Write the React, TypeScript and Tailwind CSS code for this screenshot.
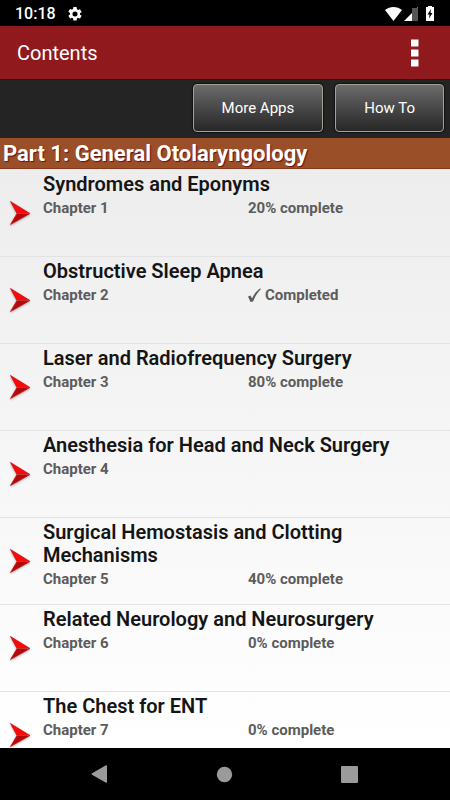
interface Chapter {
  number: number
  title: string
  progress?: number
}

const chapters: Chapter[] = [
  { number: 1, title: 'Syndromes and Eponyms', progress: 20 },
  { number: 2, title: 'Obstructive Sleep Apnea', progress: 100 },
  { number: 3, title: 'Laser and Radiofrequency Surgery', progress: 80 },
  { number: 4, title: 'Anesthesia for Head and Neck Surgery' },
  { number: 5, title: 'Surgical Hemostasis and Clotting Mechanisms', progress: 40 },
  { number: 6, title: 'Related Neurology and Neurosurgery', progress: 0 },
  { number: 7, title: 'The Chest for ENT', progress: 0 },
]

function StatusBar() {
  return (
    <div className="flex h-[26px] shrink-0 items-center justify-between bg-black pl-[15px] pr-4 pt-px text-white">
      <div className="flex items-center gap-3">
        <span className="text-base font-medium leading-5">10:18</span>
        <svg width="14" height="14" viewBox="2 2 20 20" fill="currentColor">
          <path d="M19.14 12.94c.04-.3.06-.61.06-.94s-.02-.64-.07-.94l2.03-1.58a.49.49 0 0 0 .12-.61l-1.92-3.32a.49.49 0 0 0-.59-.22l-2.39.96a7 7 0 0 0-1.62-.94l-.36-2.54A.48.48 0 0 0 13.92 2h-3.84a.47.47 0 0 0-.47.41l-.36 2.54c-.59.24-1.13.57-1.62.94l-2.39-.96a.47.47 0 0 0-.59.22L2.74 8.47a.48.48 0 0 0 .12.61l2.03 1.58c-.05.3-.09.63-.09.94s.02.64.07.94l-2.03 1.58a.49.49 0 0 0-.12.61l1.92 3.32c.12.22.37.29.59.22l2.39-.96c.5.38 1.03.7 1.62.94l.36 2.54c.05.24.24.41.48.41h3.84c.24 0 .44-.17.47-.41l.36-2.54a7 7 0 0 0 1.62-.94l2.39.96c.22.08.47 0 .59-.22l1.92-3.32a.47.47 0 0 0-.12-.61zM12 15.6a3.6 3.6 0 1 1 0-7.2 3.6 3.6 0 0 1 0 7.2z" />
        </svg>
      </div>
      <div className="flex items-center">
        <svg width="17" height="14" viewBox="0 0 17 14" fill="currentColor">
          <path d="M0 3C5 -1 12 -1 17 3L8.500 14Z" />
        </svg>
        <svg className="ml-0.5" width="14" height="14" viewBox="0 0 14 14">
          <path d="M0 14L14 0V14Z" fill="#fff" />
          <path d="M8 1H14V14H8Z" fill="#555" />
        </svg>
        <svg className="ml-2" width="8" height="15" viewBox="0 0 8 15">
          <path d="M2 0H6V1H8V15H0V1H2Z" fill="#fff" />
          <path d="M5 3L1.500 8.500H3.500L3 12.500L6.500 7H4.500Z" fill="#000" />
        </svg>
      </div>
    </div>
  )
}

function Arrow() {
  return (
    <svg
      className="drop-shadow-[0_1px_1px_rgba(0,0,0,0.3)]"
      width="21"
      height="24"
      viewBox="0 0 21 24"
    >
      <path d="M0.500 0.500L20 12.500H7Z" fill="#fb0808" />
      <path d="M0.500 23.500L20 12.500H7Z" fill="#b20a0c" />
      <path d="M0.500 0.500L20 12.500L0.500 23.500L7 12.500Z" fill="none" stroke="#c80c0c" strokeWidth="0.700" />
    </svg>
  )
}

function ToolbarButton({ label }: { label: string }) {
  return (
    <button className="h-12 rounded border border-[#a5a193] bg-linear-to-b from-[#6c6c6c] to-[#272727] px-7 text-[15px] text-white shadow-[0_0_1px_1px_#111]">
      {label}
    </button>
  )
}

function ChapterRow({ chapter }: { chapter: Chapter }) {
  const { number, title, progress } = chapter

  return (
    <li className="border-b border-[#e3e3e3]">
      <button className="flex h-[86px] w-full items-start pl-2.5 text-left">
        <span className="flex h-full w-[33px] shrink-0 items-center">
          <Arrow />
        </span>
        <span className="block flex-1 pt-[3px]">
          <span className="block text-xl font-semibold leading-[23px] text-[#151515]">{title}</span>
          <span className="flex pt-0.5 text-[15px] font-bold leading-5 text-[#5c5c5c]">
            <span className="w-[205px]">Chapter {number}</span>
            {progress === 100 && (
              <span className="flex items-center gap-1">
                <svg width="13" height="14" viewBox="0 0 13 14" fill="currentColor">
                  <path d="M0 8.500L2.500 7.500L4 10.500C6 6 9 2.500 12 0.500L13 1C9.500 4.500 7 8.500 5 13.500L2.500 14Z" />
                </svg>
                Completed
              </span>
            )}
            {progress !== undefined && progress < 100 && <span>{progress}% complete</span>}
          </span>
        </span>
      </button>
    </li>
  )
}

export default function App() {
  return (
    <div className="flex h-screen flex-col overflow-hidden bg-black font-['Roboto',sans-serif]">
      <StatusBar />

      <header className="flex h-[53px] shrink-0 items-center justify-between bg-[#8f191d] pl-[17px] pr-[31px] text-white">
        <h1 className="text-xl leading-6">Contents</h1>
        <button aria-label="More options">
          <svg width="8" height="28" viewBox="0 0 8 28" fill="currentColor">
            <path d="M0 0.500H7.500V7.500H0ZM0 10.500H7.500V17.500H0ZM0 20.500H7.500V27.500H0Z" />
          </svg>
        </button>
      </header>

      <div className="flex h-[59px] shrink-0 items-center justify-end gap-3 border-t border-[#1a1a1a] bg-[#242424] px-1.5 pb-0.5">
        <ToolbarButton label="More Apps" />
        <ToolbarButton label="How To" />
      </div>

      <main className="flex min-h-0 flex-1 flex-col bg-linear-to-b from-[#ececec] to-white">
        <h2 className="h-[31px] shrink-0 border-b border-[#8a3a1c] bg-[#9a4f28] pl-[3px] text-[22px] font-bold leading-8 text-white [text-shadow:1px_1px_1px_#6b1010]">
          Part 1: General Otolaryngology
        </h2>
        <ul className="min-h-0 flex-1 overflow-y-auto pt-px [scrollbar-width:none]">
          {chapters.map((chapter) => (
            <ChapterRow key={chapter.number} chapter={chapter} />
          ))}
        </ul>
      </main>

      <nav className="flex h-[52px] shrink-0 items-center justify-center gap-[108px] pr-0.5 text-[#9b9b9b]">
        <button aria-label="Back">
          <svg width="17" height="18" viewBox="0 0 17 18" fill="currentColor">
            <path d="M15 0.300Q16 0 16 1V17Q16 18 15 17.700L1 9.700Q0 9 1 8.300Z" />
          </svg>
        </button>
        <button aria-label="Home">
          <svg width="17" height="17" viewBox="0 0 17 17" fill="currentColor">
            <circle cx="8.500" cy="8.500" r="7.700" />
          </svg>
        </button>
        <button aria-label="Recent apps">
          <svg width="17" height="17" viewBox="0 0 17 17" fill="currentColor">
            <rect width="17" height="17" rx="1" />
          </svg>
        </button>
      </nav>
    </div>
  )
}
